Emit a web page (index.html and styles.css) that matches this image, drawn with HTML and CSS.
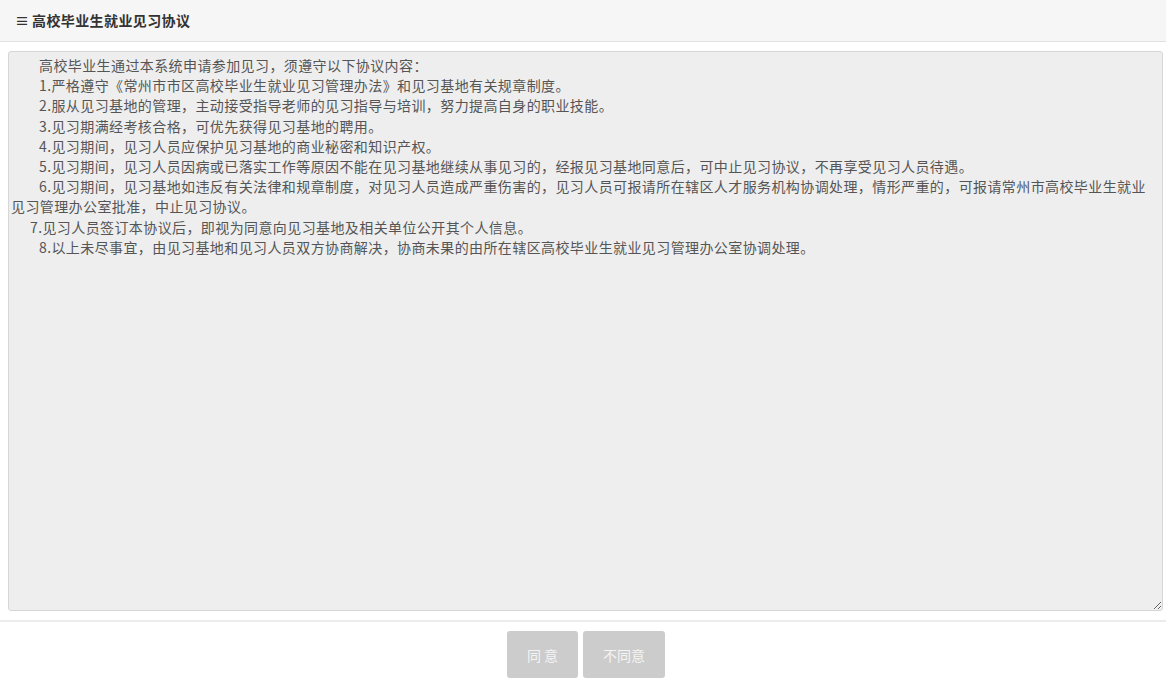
FILE: index.html
```html
<!DOCTYPE html>
<html lang="zh-CN">
<head>
<meta charset="utf-8">
<title>高校毕业生就业见习协议</title>
<link rel="stylesheet" href="styles.css">
</head>
<body>
<div class="header"><span class="menu">≡</span>高校毕业生就业见习协议</div>
<div class="main">
  <div class="agreement">
    <p>高校毕业生通过本系统申请参加见习，须遵守以下协议内容：</p>
    <p>1.严格遵守《常州市市区高校毕业生就业见习管理办法》和见习基地有关规章制度。</p>
    <p>2.服从见习基地的管理，主动接受指导老师的见习指导与培训，努力提高自身的职业技能。</p>
    <p>3.见习期满经考核合格，可优先获得见习基地的聘用。</p>
    <p>4.见习期间，见习人员应保护见习基地的商业秘密和知识产权。</p>
    <p>5.见习期间，见习人员因病或已落实工作等原因不能在见习基地继续从事见习的，经报见习基地同意后，可中止见习协议，不再享受见习人员待遇。</p>
    <p>6.见习期间，见习基地如违反有关法律和规章制度，对见习人员造成严重伤害的，见习人员可报请所在辖区人才服务机构协调处理，情形严重的，可报请常州市高校毕业生就业<br>见习管理办公室批准，中止见习协议。</p>
    <p class="short">7.见习人员签订本协议后，即视为同意向见习基地及相关单位公开其个人信息。</p>
    <p>8.以上未尽事宜，由见习基地和见习人员双方协商解决，协商未果的由所在辖区高校毕业生就业见习管理办公室协调处理。</p>
  </div>
</div>
<div class="footer">
  <button class="btn btn-agree">同 意</button>
  <button class="btn btn-disagree">不同意</button>
</div>
</body>
</html>
```
FILE: styles.css
```css
html, body {
  margin: 0;
  padding: 0;
  background: #fff;
  font-family: "Noto Sans CJK SC", "Microsoft YaHei", sans-serif;
}
.header {
  height: 41px;
  line-height: 40px;
  background: #f6f6f6;
  border-bottom: 1px solid #e2e2e2;
  padding-left: 15px;
  font-size: 14px;
  font-weight: bold;
  color: #333;
  letter-spacing: 0.4px;
}
.menu {
  display: inline-block;
  width: 17px;
  font-weight: bold;
}
.main {
  padding: 9px 3px 0 8px;
}
.agreement {
  height: 553px;
  background: #eeeeee;
  border: 1px solid #d6d6d6;
  border-radius: 3px;
  padding: 3px 2px 2px 2px;
  font-size: 14px;
  letter-spacing: 0.4px;
  line-height: 20.2px;
  color: #555;
  overflow: auto;
  resize: vertical;
}
.agreement p {
  margin: 0;
  text-indent: 28px;
  white-space: nowrap;
}
.agreement p.short {
  text-indent: 19px;
}
.footer {
  margin-top: 9px;
  border-top: 2px solid #ececec;
  padding: 9px 0 0 6px;
  display: flex;
  justify-content: center;
  gap: 5px;
}
.btn {
  height: 47px;
  border: none;
  border-radius: 3px;
  background: #cccccc;
  color: #f4f4f4;
  font-family: "Noto Sans CJK SC", sans-serif;
  font-size: 14px;
}
.btn-agree {
  width: 71px;
}
.btn-disagree {
  width: 82px;
}
```
